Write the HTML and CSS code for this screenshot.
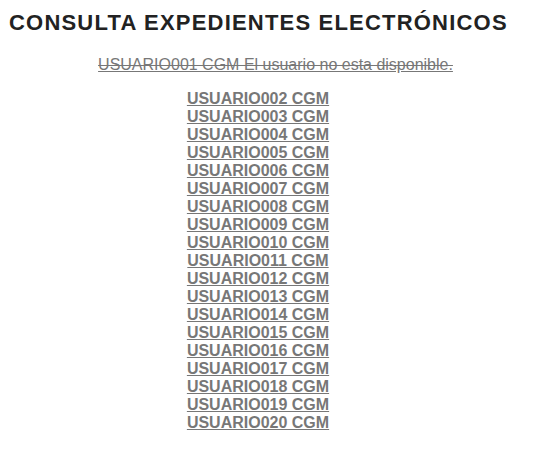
FILE: index.html
```html
<!DOCTYPE html>
<html lang="es">
<head>
<meta charset="utf-8">
<title>Consulta Expedientes Electrónicos</title>
<link rel="stylesheet" href="styles.css">
</head>
<body>
<h1 class="title">CONSULTA EXPEDIENTES ELECTRÓNICOS</h1>
<div class="content">
  <p class="disabled"><a href="#" class="off">USUARIO001 CGM El usuario no esta disponible.</a></p>
  <ul class="users">
    <li><a href="#">USUARIO002 CGM</a></li>
    <li><a href="#">USUARIO003 CGM</a></li>
    <li><a href="#">USUARIO004 CGM</a></li>
    <li><a href="#">USUARIO005 CGM</a></li>
    <li><a href="#">USUARIO006 CGM</a></li>
    <li><a href="#">USUARIO007 CGM</a></li>
    <li><a href="#">USUARIO008 CGM</a></li>
    <li><a href="#">USUARIO009 CGM</a></li>
    <li><a href="#">USUARIO010 CGM</a></li>
    <li><a href="#">USUARIO011 CGM</a></li>
    <li><a href="#">USUARIO012 CGM</a></li>
    <li><a href="#">USUARIO013 CGM</a></li>
    <li><a href="#">USUARIO014 CGM</a></li>
    <li><a href="#">USUARIO015 CGM</a></li>
    <li><a href="#">USUARIO016 CGM</a></li>
    <li><a href="#">USUARIO017 CGM</a></li>
    <li><a href="#">USUARIO018 CGM</a></li>
    <li><a href="#">USUARIO019 CGM</a></li>
    <li><a href="#">USUARIO020 CGM</a></li>
  </ul>
</div>
</body>
</html>
```

FILE: styles.css
```css
body {
  margin: 8px;
  font-family: "Liberation Sans", Arial, sans-serif;
  background: #fff;
}
.title {
  font-size: 22px;
  font-weight: bold;
  letter-spacing: 1.2px;
  color: #222;
  margin: 2px 0 0 1px;
}
.content {
  text-align: center;
}
.disabled {
  margin: 20px 0 0 4px;
  font-size: 16px;
}
.off {
  color: #777;
  text-decoration: underline line-through;
}
.users {
  list-style: none;
  margin: 16px 0 0 0;
  padding: 0 31px 0 0;
}
.users li {
  font-size: 16px;
  font-weight: bold;
  line-height: 18px;
}
.users a {
  color: #777;
  text-decoration: underline;
}
```
